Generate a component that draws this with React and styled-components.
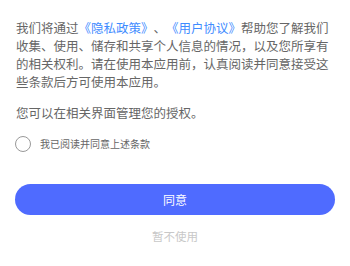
import React, { useState } from "react";
import styled, { createGlobalStyle } from "styled-components";

const GlobalStyle = createGlobalStyle`
  html, body {
    margin: 0;
    padding: 0;
    background: #fff;
  }
  body {
    font-family: "Noto Sans CJK SC", "Noto Sans", sans-serif;
    text-spacing-trim: space-all;
  }
`;

const Page = styled.div`
  width: 350px;
  box-sizing: border-box;
  padding: 19px 16px 0 16px;
  display: flex;
  flex-direction: column;
`;

const Paragraph = styled.p`
  margin: 0 0 ${(p) => p.$gap || 0}px 0;
  font-size: 12.5px;
  line-height: 18px;
  color: #666;
  font-feature-settings: "palt" 0;
`;

const Link = styled.span`
  color: #3f8cff;
`;

const CheckRow = styled.label`
  display: flex;
  align-items: center;
  gap: 9px;
  height: 16px;
  margin-top: 14px;
  margin-left: -1px;
  cursor: pointer;
`;

const Circle = styled.span`
  width: 14px;
  height: 14px;
  border-radius: 50%;
  border: 1px solid ${(p) => (p.$checked ? "#4f6bff" : "#999")};
  background: ${(p) => (p.$checked ? "#4f6bff" : "#fff")};
  flex-shrink: 0;
`;

const CheckText = styled.span`
  font-size: 10px;
  line-height: 16px;
  color: #666;
`;

const AgreeButton = styled.button`
  margin: 32px 0 0 -1px;
  width: 320px;
  height: 31px;
  border: none;
  border-radius: 16px;
  background: #4f6bff;
  color: #fff;
  font-family: inherit;
  font-size: 12px;
  cursor: pointer;
`;

const Skip = styled.div`
  margin-top: 12px;
  text-align: center;
  font-size: 11.5px;
  line-height: 18px;
  color: #c8c8c8;
`;

export default function App() {
  const [checked, setChecked] = useState(false);
  return (
    <>
      <GlobalStyle />
      <Page>
        <Paragraph $gap={13}>
          我们将通过<Link>《隐私政策》</Link>、<Link>《用户协议》</Link>帮助您了解我们收集、使用、储存和共享个人信息的情况，以及您所享有的相关权利。请在使用本应用前，认真阅读并同意接受这些条款后方可使用本应用。
        </Paragraph>
        <Paragraph>您可以在相关界面管理您的授权。</Paragraph>
        <CheckRow onClick={() => setChecked(!checked)}>
          <Circle $checked={checked} />
          <CheckText>我已阅读并同意上述条款</CheckText>
        </CheckRow>
        <AgreeButton>同意</AgreeButton>
        <Skip>暂不使用</Skip>
      </Page>
    </>
  );
}
